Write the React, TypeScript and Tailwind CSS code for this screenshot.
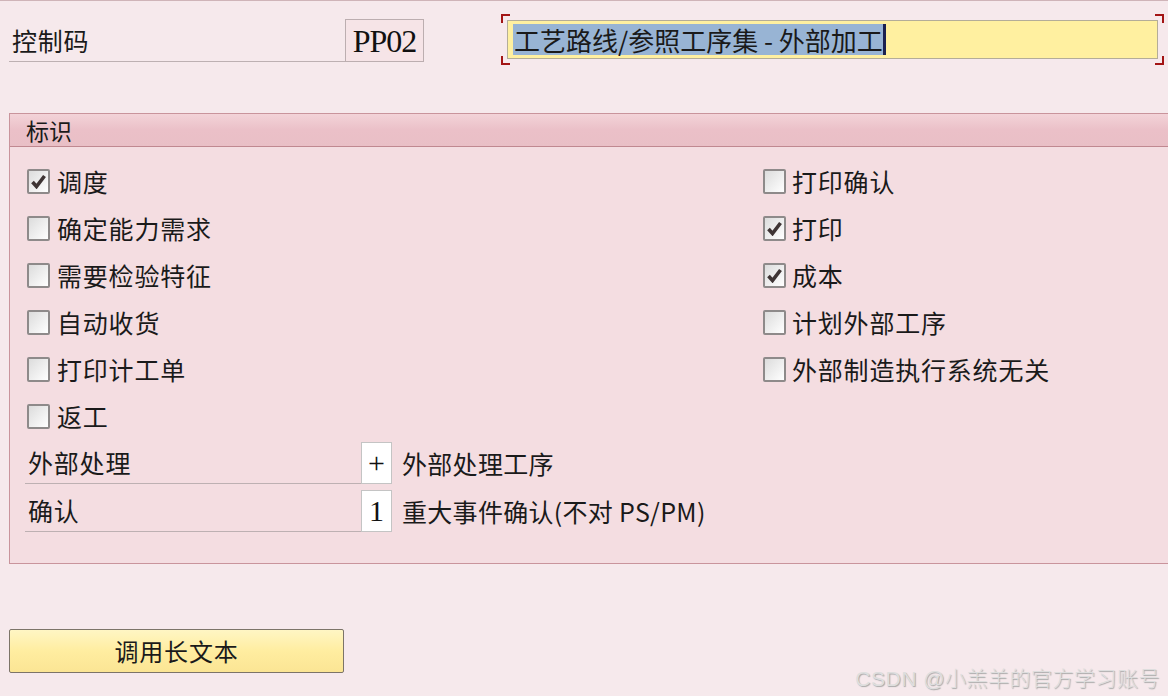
import React from 'react';

const cjk = { fontFamily: '"Noto Sans CJK SC", "Noto Sans", sans-serif' };
const serif = { fontFamily: '"Liberation Serif", serif' };

type Item = { label: string; checked: boolean };

const leftItems: Item[] = [
  { label: '调度', checked: true },
  { label: '确定能力需求', checked: false },
  { label: '需要检验特征', checked: false },
  { label: '自动收货', checked: false },
  { label: '打印计工单', checked: false },
  { label: '返工', checked: false },
];

const rightItems: Item[] = [
  { label: '打印确认', checked: false },
  { label: '打印', checked: true },
  { label: '成本', checked: true },
  { label: '计划外部工序', checked: false },
  { label: '外部制造执行系统无关', checked: false },
];

const CheckBox: React.FC<{ checked: boolean }> = ({ checked }) => (
  <div className="w-[23px] h-[25px] shrink-0 rounded-[2px] border-2 border-[#8e8a8a] bg-gradient-to-br from-[#dcdcdc] to-white flex items-center justify-center">
    {checked && (
      <svg width="15" height="15" viewBox="0 0 15 15">
        <path d="M1.5 8 L5.5 12.5 L13.5 2" fill="none" stroke="#3e3434" strokeWidth="3.6" />
      </svg>
    )}
  </div>
);

const CheckRow: React.FC<Item & { gap: string }> = ({ label, checked, gap }) => (
  <div className={`h-[47px] flex items-center ${gap}`}>
    <CheckBox checked={checked} />
    <span className="text-[25px] tracking-[0.8px] text-[#1a1a1a] leading-none">{label}</span>
  </div>
);

const Corner: React.FC<{ pos: string }> = ({ pos }) => (
  <div className={`absolute w-[9px] h-[9px] border-[#a31515] ${pos}`} />
);

export default function App() {
  return (
    <div className="w-[1168px] h-[696px] overflow-hidden bg-[#f6e9ec] border-t border-[#cfb4b8] relative" style={cjk}>
      {/* top row */}
      <div className="flex items-start pt-[18px] pl-[9px]">
        <div className="w-[336px] h-[43px] border-b border-[#bdb0b2] flex items-center pl-[3px]">
          <span className="text-[25px] tracking-[0.8px] text-[#1a1a1a] leading-none">控制码</span>
        </div>
        <div className="w-[79px] h-[43px] border border-[#bcaeb0] bg-[#f6e4e7] flex items-center justify-center">
          <span className="text-[32px] tracking-[-1px] text-[#111] leading-none" style={serif}>
            PP02
          </span>
        </div>
        <div className="relative ml-[77px] -mt-[5px] w-[663px] h-[51px] p-[6px]">
          <Corner pos="top-0 left-0 border-t-2 border-l-2" />
          <Corner pos="top-0 right-0 border-t-2 border-r-2" />
          <Corner pos="bottom-0 left-0 border-b-2 border-l-2" />
          <Corner pos="bottom-0 right-0 border-b-2 border-r-2" />
          <div className="h-full border border-[#b4ad98] bg-[#fff0a0] flex items-center pl-[5px]">
            <span className="h-[31px] bg-[#98b4d4] flex items-center pl-[1px] text-[26px] text-[#1a1a1a] leading-none">
              工艺路线/参照工序集 - 外部加工
            </span>
            <span className="w-[3px] h-[31px] bg-[#1b2150]" />
          </div>
        </div>
      </div>

      {/* group box */}
      <div className="ml-[9px] mt-[48px] w-[1170px] h-[451px] border border-[#c9949c] bg-[#f4dde1] flex flex-col">
        <div className="h-[33px] shrink-0 border-b border-[#c08890] bg-gradient-to-b from-[#f3d3d8] via-[#ebc0c8] to-[#e9bfc6] flex items-center pl-[16px]">
          <span className="text-[23px] text-[#1a1a1a] leading-none">标识</span>
        </div>
        <div className="flex pt-[11px]">
          <div className="flex flex-col pl-[17px] w-[753px]">
            {leftItems.map((it) => (
              <CheckRow key={it.label} {...it} gap="gap-[7px]" />
            ))}
          </div>
          <div className="flex flex-col">
            {rightItems.map((it) => (
              <CheckRow key={it.label} {...it} gap="gap-[6px]" />
            ))}
          </div>
        </div>
        <div className="flex flex-col gap-[6px] pl-[15px] pt-[2px]">
          {[
            { label: '外部处理', value: '+', desc: '外部处理工序' },
            { label: '确认', value: '1', desc: '重大事件确认(不对 PS/PM)' },
          ].map((r) => (
            <div key={r.label} className="flex items-stretch h-[42px]">
              <div className="w-[336px] border-b border-[#bdb0b2] flex items-center pl-[3px]">
                <span className="text-[25px] tracking-[0.8px] text-[#1a1a1a] leading-none">{r.label}</span>
              </div>
              <div className="w-[31px] border border-[#c4c4c4] bg-white flex items-center justify-center">
                <span className="text-[30px] text-[#111] leading-none" style={serif}>
                  {r.value}
                </span>
              </div>
              <div className="flex items-center pl-[10px]">
                <span className="text-[25px] tracking-[0.3px] text-[#1a1a1a] leading-none">{r.desc}</span>
              </div>
            </div>
          ))}
        </div>
      </div>

      {/* button */}
      <div className="ml-[9px] mt-[65px]">
        <button className="w-[335px] h-[44px] rounded-[2px] border border-[#7c7468] bg-gradient-to-b from-[#fff6c4] via-[#ffeda0] to-[#fbe594] flex items-center justify-center">
          <span className="text-[24px] tracking-[0.8px] text-[#1a1a1a] leading-none">调用长文本</span>
        </button>
      </div>

      {/* watermark */}
      <div
        className="absolute right-[8px] bottom-[7px] text-[21px] tracking-[0.5px] leading-none font-light text-[#dedede]"
        style={{ textShadow: '1px 1px 1px #a8a8a8', fontFamily: '"Liberation Sans", "Noto Sans CJK SC", sans-serif' }}
      >
        CSDN @小羔羊的官方学习账号
      </div>
    </div>
  );
}
